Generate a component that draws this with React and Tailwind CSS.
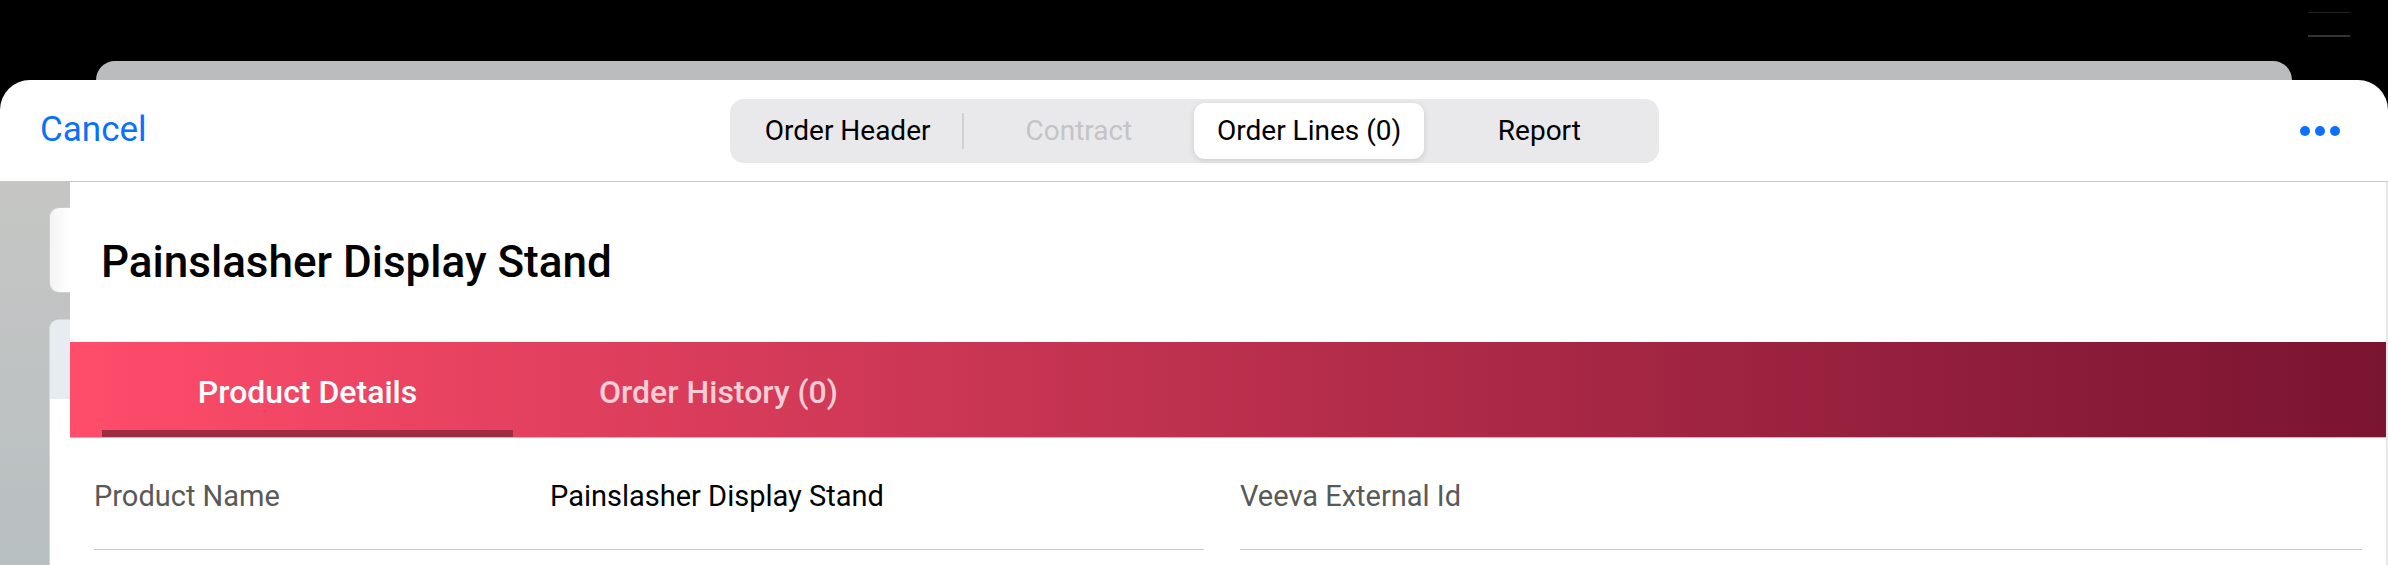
const segments = [
  { label: 'Order Header', state: 'normal' },
  { label: 'Contract', state: 'disabled' },
  { label: 'Order Lines (0)', state: 'selected' },
  { label: 'Report', state: 'normal' },
];

function Segmented() {
  return (
    <div className="grid h-[64px] w-[929px] grid-cols-4 rounded-[14px] bg-[#e9e9eb] p-[4px]">
      {segments.map((s, i) => (
        <div key={s.label} className="flex items-center">
          <div
            className={
              s.state === 'selected'
                ? 'flex h-full flex-1 items-center justify-center rounded-[11px] bg-white text-[28px] text-black shadow-[0_2px_6px_rgba(0,0,0,0.12)]'
                : s.state === 'disabled'
                ? 'flex h-full flex-1 items-center justify-center text-[28px] text-[#c4c4c6]'
                : 'flex h-full flex-1 items-center justify-center text-[28px] text-black'
            }
          >
            {s.label}
          </div>
          {i === 0 && <div className="h-[36px] w-[2px] bg-[#d1d1d4]" />}
        </div>
      ))}
    </div>
  );
}

function Field({ label, value }) {
  return (
    <div className="flex h-[112px] items-center border-b border-[#c8c8c8] pt-[7px] text-[29px]">
      <div className="w-[456px] text-[#595959]">{label}</div>
      <div className="text-black">{value}</div>
    </div>
  );
}

export default function App() {
  return (
    <div className="relative h-[565px] w-[2388px] overflow-hidden bg-black font-['Roboto',sans-serif]">
      {/* faint status bar bits */}
      <div className="absolute left-[2308px] top-[12px] h-px w-[42px] bg-[#222]" />
      <div className="absolute left-[2308px] top-[35px] h-[2px] w-[42px] bg-[#333]" />

      <div className="h-[61px]" />
      <div className="mx-[96px] h-[19px] rounded-t-[20px] bg-[#bbbcbe]" />

      <div className="rounded-t-[30px] bg-white">
        <header className="grid h-[102px] grid-cols-[1fr_auto_1fr] items-center border-b border-[#c6c6c8]">
          <div className="pl-[40px] text-[35px] text-[#0c6ffd]">Cancel</div>
          <Segmented />
          <div className="flex justify-end gap-[5px] pr-[48px]">
            <span className="h-[10px] w-[10px] rounded-full bg-[#0c6ffd]" />
            <span className="h-[10px] w-[10px] rounded-full bg-[#0c6ffd]" />
            <span className="h-[10px] w-[10px] rounded-full bg-[#0c6ffd]" />
          </div>
        </header>

        <div className="flex h-[383px]">
          <aside className="w-[70px] bg-linear-to-b from-[#c5c6c4] to-[#b8bfc1] pt-[25px]">
            <div className="ml-[49px] h-[86px] rounded-l-[10px] border border-r-0 border-[#cfcfcf] bg-linear-to-r from-[#f4f4f4] to-white" />
            <div className="ml-[49px] mt-[26px] h-[260px] overflow-hidden rounded-tl-[10px] border-l border-t border-[#d6d8da] bg-white">
              <div className="h-[79px] bg-[#e6ecef]" />
            </div>
          </aside>

          <main className="flex-1 border-r-2 border-[#e6e8ec] bg-white">
            <div className="flex h-[160px] items-center pl-[31px] text-[44px] font-medium text-black">
              Painslasher Display Stand
            </div>

            <div className="flex h-[96px] border-b border-[#bdbdbd] bg-linear-to-r from-[#ff4c6b] to-[#7a1431] pl-[32px]">
              <div className="flex w-[411px] flex-col">
                <div className="flex flex-1 items-center justify-center pt-[12px] text-[32px] font-medium text-white">
                  Product Details
                </div>
                <div className="h-[7px] bg-[#9e2c43]" />
              </div>
              <div className="flex w-[411px] flex-col">
                <div className="flex flex-1 items-center justify-center pt-[12px] text-[32px] font-medium text-white/75">
                  Order History (0)
                </div>
                <div className="h-[7px]" />
              </div>
            </div>

            <div className="grid grid-cols-[1110px_1fr] gap-[36px] px-[24px]">
              <Field label="Product Name" value="Painslasher Display Stand" />
              <Field label="Veeva External Id" value="" />
            </div>
          </main>
        </div>
      </div>
    </div>
  );
}
